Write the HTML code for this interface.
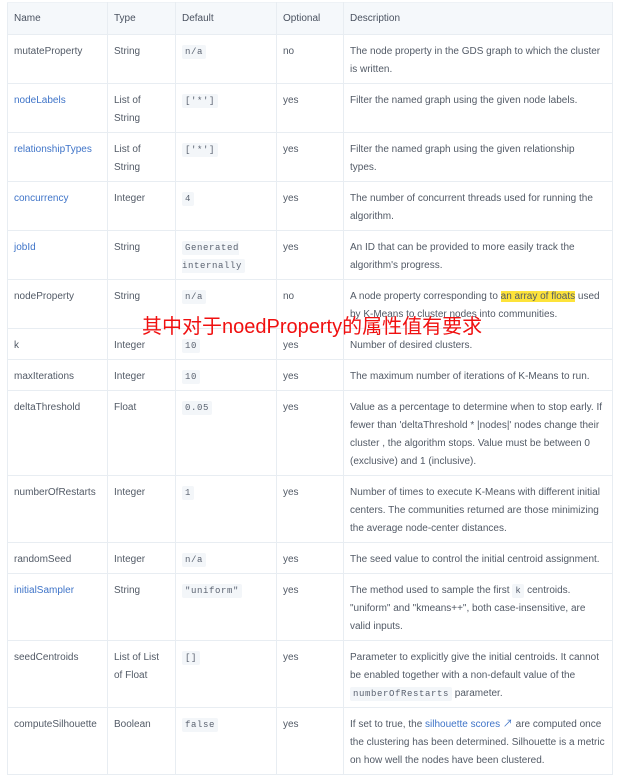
<!DOCTYPE html>
<html><head><meta charset="utf-8"><style>
html,body{margin:0;padding:0;background:#fff;width:626px;height:775px;overflow:hidden}
body{font-family:"Liberation Sans","Noto Sans CJK SC",sans-serif;font-size:10px;color:#525a66;position:relative}
table{position:absolute;left:7px;top:2px;border-collapse:collapse;table-layout:fixed;width:605px}
td,th{border:1px solid #e8edf2;padding:8px 6px 4px;vertical-align:top;line-height:18px;text-align:left;font-weight:normal;box-sizing:border-box}
td:last-child{white-space:nowrap;overflow:hidden}
th{background:#f5f8fb;color:#4a5260;padding:7px 6px 6px;height:31px;line-height:18px;border-top-color:#eef2f6}
a{color:#3f74c8;text-decoration:none}
code{font-family:"Liberation Mono",monospace;font-size:9px;background:#f3f6f9;padding:2px 3px;border-radius:2px;color:#5a6270;letter-spacing:0.6px}
.hl{background:#fde33a}
.ov{position:absolute;left:142px;top:314px;color:#f01010;font-size:20px;font-family:"Liberation Sans","Noto Sans CJK SC",sans-serif;white-space:nowrap;line-height:26px}
</style></head><body>
<table>
<colgroup><col style="width:100px"><col style="width:68px"><col style="width:101px"><col style="width:67px"><col style="width:269px"></colgroup>
<tr style="height:31px"><th>Name</th><th>Type</th><th>Default</th><th>Optional</th><th>Description</th></tr>
<tr style="height:49px"><td>mutateProperty</td><td>String</td><td><code>n/a</code></td><td>no</td><td>The node property in the GDS graph to which the cluster<br>is written.</td></tr>
<tr style="height:49px"><td><a>nodeLabels</a></td><td>List of String</td><td><code>['*']</code></td><td>yes</td><td>Filter the named graph using the given node labels.</td></tr>
<tr style="height:49px"><td><a>relationshipTypes</a></td><td>List of String</td><td><code>['*']</code></td><td>yes</td><td>Filter the named graph using the given relationship<br>types.</td></tr>
<tr style="height:49px"><td><a>concurrency</a></td><td>Integer</td><td><code>4</code></td><td>yes</td><td>The number of concurrent threads used for running the<br>algorithm.</td></tr>
<tr style="height:49px"><td><a>jobId</a></td><td>String</td><td><code>Generated internally</code></td><td>yes</td><td>An ID that can be provided to more easily track the<br>algorithm's progress.</td></tr>
<tr style="height:49px"><td>nodeProperty</td><td>String</td><td><code>n/a</code></td><td>no</td><td>A node property corresponding to <span class="hl">an array of floats</span> used<br>by K-Means to cluster nodes into communities.</td></tr>
<tr style="height:31px"><td>k</td><td>Integer</td><td><code>10</code></td><td>yes</td><td>Number of desired clusters.</td></tr>
<tr style="height:31px"><td>maxIterations</td><td>Integer</td><td><code>10</code></td><td>yes</td><td>The maximum number of iterations of K-Means to run.</td></tr>
<tr style="height:85px"><td>deltaThreshold</td><td>Float</td><td><code>0.05</code></td><td>yes</td><td>Value as a percentage to determine when to stop early. If<br>fewer than 'deltaThreshold * |nodes|' nodes change their<br>cluster , the algorithm stops. Value must be between 0<br>(exclusive) and 1 (inclusive).</td></tr>
<tr style="height:67px"><td>numberOfRestarts</td><td>Integer</td><td><code>1</code></td><td>yes</td><td>Number of times to execute K-Means with different initial<br>centers. The communities returned are those minimizing<br>the average node-center distances.</td></tr>
<tr style="height:31px"><td>randomSeed</td><td>Integer</td><td><code>n/a</code></td><td>yes</td><td>The seed value to control the initial centroid assignment.</td></tr>
<tr style="height:67px"><td><a>initialSampler</a></td><td>String</td><td><code>"uniform"</code></td><td>yes</td><td>The method used to sample the first <code>k</code> centroids.<br>"uniform" and "kmeans++", both case-insensitive, are<br>valid inputs.</td></tr>
<tr style="height:67px"><td>seedCentroids</td><td>List of List of Float</td><td><code>[]</code></td><td>yes</td><td>Parameter to explicitly give the initial centroids. It cannot<br>be enabled together with a non-default value of the<br><code>numberOfRestarts</code> parameter.</td></tr>
<tr style="height:65px"><td>computeSilhouette</td><td>Boolean</td><td><code>false</code></td><td>yes</td><td>If set to true, the <a>silhouette scores ↗</a> are computed once<br>the clustering has been determined. Silhouette is a metric<br>on how well the nodes have been clustered.</td></tr>
</table>
<div class="ov">其中对于noedProperty的属性值有要求</div>
</body></html>
